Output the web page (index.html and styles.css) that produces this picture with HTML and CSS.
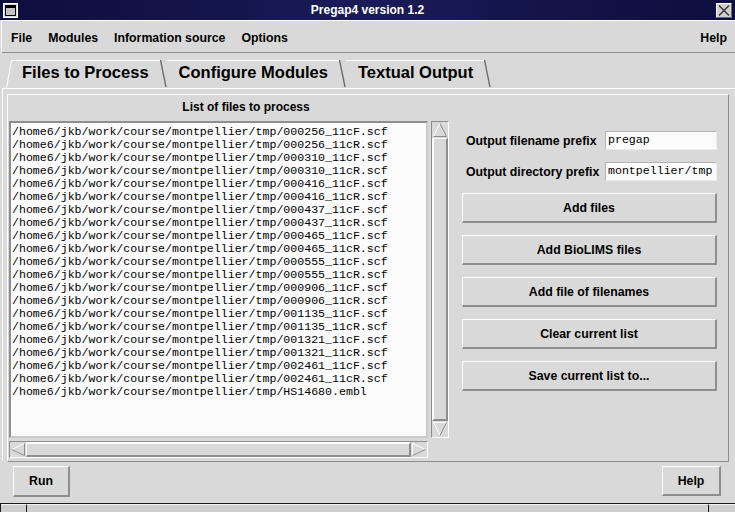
FILE: index.html
```html
<!DOCTYPE html>
<html>
<head>
<meta charset="utf-8">
<title>Pregap4 version 1.2</title>
<link rel="stylesheet" href="styles.css">
</head>
<body>
<div class="window">
  <div class="titlebar">
    <span class="tb-icon">
      <svg width="15" height="15" viewBox="0 0 15 15">
        <rect x="0.5" y="0.5" width="14" height="14" fill="#d9d9d9" stroke="#ffffff"/>
        <rect x="2.5" y="2.5" width="10" height="10" fill="#c4c4c4" stroke="#000000"/>
        <rect x="3" y="3" width="9" height="2" fill="#000000"/>
      </svg>
    </span>
    <span class="title">Pregap4 version 1.2</span>
    <span class="tb-close">
      <svg width="16" height="15" viewBox="0 0 16 15">
        <rect x="0" y="0" width="16" height="15" fill="#d0d0d0"/>
        <path d="M0.5 14.5 V0.5 H15.5" fill="none" stroke="#ffffff"/>
        <path d="M15.5 0.5 V14.5 H0.5" fill="none" stroke="#6a6a6a"/>
        <path d="M3 2.5 L13 12.5 M13 2.5 L3 12.5" stroke="#303030" stroke-width="1.3"/>
      </svg>
    </span>
  </div>

  <div class="menubar">
    <span class="menu">File</span>
    <span class="menu">Modules</span>
    <span class="menu">Information source</span>
    <span class="menu">Options</span>
    <span class="menu-spacer"></span>
    <span class="menu">Help</span>
  </div>

  <div class="tabs">
    <svg class="tab-lead" width="6" height="28" viewBox="0 0 6 28">
      <path d="M5.5 0.5 L0.5 28" stroke="#ffffff" fill="none"/>
    </svg>
    <div class="tab tab-first">Files to Process</div>
    <svg class="tab-sep" width="7" height="28" viewBox="0 0 7 28">
      <path d="M0.5 0 L6 27" stroke="#6e6e6e" stroke-width="1.4" fill="none"/>
    </svg>
    <div class="tab">Configure Modules</div>
    <svg class="tab-sep" width="7" height="28" viewBox="0 0 7 28">
      <path d="M0.5 0 L6 27" stroke="#6e6e6e" stroke-width="1.4" fill="none"/>
    </svg>
    <div class="tab">Textual Output</div>
    <svg class="tab-sep" width="7" height="28" viewBox="0 0 7 28">
      <path d="M0.5 0 L6 27" stroke="#6e6e6e" stroke-width="1.4" fill="none"/>
    </svg>
  </div>

  <div class="notebook">
    <div class="page">
      <div class="left-col">
        <div class="list-title">List of files to process</div>
        <div class="list-grid">
          <div class="listbox">
            <div class="line">/home6/jkb/work/course/montpellier/tmp/000256_11cF.scf</div>
            <div class="line">/home6/jkb/work/course/montpellier/tmp/000256_11cR.scf</div>
            <div class="line">/home6/jkb/work/course/montpellier/tmp/000310_11cF.scf</div>
            <div class="line">/home6/jkb/work/course/montpellier/tmp/000310_11cR.scf</div>
            <div class="line">/home6/jkb/work/course/montpellier/tmp/000416_11cF.scf</div>
            <div class="line">/home6/jkb/work/course/montpellier/tmp/000416_11cR.scf</div>
            <div class="line">/home6/jkb/work/course/montpellier/tmp/000437_11cF.scf</div>
            <div class="line">/home6/jkb/work/course/montpellier/tmp/000437_11cR.scf</div>
            <div class="line">/home6/jkb/work/course/montpellier/tmp/000465_11cF.scf</div>
            <div class="line">/home6/jkb/work/course/montpellier/tmp/000465_11cR.scf</div>
            <div class="line">/home6/jkb/work/course/montpellier/tmp/000555_11cF.scf</div>
            <div class="line">/home6/jkb/work/course/montpellier/tmp/000555_11cR.scf</div>
            <div class="line">/home6/jkb/work/course/montpellier/tmp/000906_11cF.scf</div>
            <div class="line">/home6/jkb/work/course/montpellier/tmp/000906_11cR.scf</div>
            <div class="line">/home6/jkb/work/course/montpellier/tmp/001135_11cF.scf</div>
            <div class="line">/home6/jkb/work/course/montpellier/tmp/001135_11cR.scf</div>
            <div class="line">/home6/jkb/work/course/montpellier/tmp/001321_11cF.scf</div>
            <div class="line">/home6/jkb/work/course/montpellier/tmp/001321_11cR.scf</div>
            <div class="line">/home6/jkb/work/course/montpellier/tmp/002461_11cF.scf</div>
            <div class="line">/home6/jkb/work/course/montpellier/tmp/002461_11cR.scf</div>
            <div class="line">/home6/jkb/work/course/montpellier/tmp/HS14680.embl</div>
          </div>
          <div class="vscroll">
            <svg class="arrow" width="16" height="16" viewBox="0 0 16 16">
              <polygon points="8,1.5 1.5,14.5 14.5,14.5" fill="#d9d9d9"/>
              <path d="M1.5 14.5 L8 1.5" stroke="#ffffff" fill="none"/>
              <path d="M8 1.5 L14.5 14.5 H1.5" stroke="#8e8e8e" fill="none"/>
            </svg>
            <div class="vslider"></div>
            <svg class="arrow" width="16" height="16" viewBox="0 0 16 16">
              <polygon points="1.5,1.5 14.5,1.5 8,14.5" fill="#d9d9d9"/>
              <path d="M8 14.5 L1.5 1.5 H14.5" stroke="#ffffff" fill="none"/>
              <path d="M14.5 1.5 L8 14.5" stroke="#8e8e8e" fill="none"/>
            </svg>
          </div>
          <div class="hscroll">
            <svg class="arrow" width="16" height="15" viewBox="0 0 16 15">
              <polygon points="1.5,7.5 14.5,1.5 14.5,13.5" fill="#d9d9d9"/>
              <path d="M1.5 7.5 L14.5 1.5" stroke="#ffffff" fill="none"/>
              <path d="M14.5 1.5 V13.5 L1.5 7.5" stroke="#8e8e8e" fill="none"/>
            </svg>
            <div class="hslider"></div>
            <svg class="arrow" width="16" height="15" viewBox="0 0 16 15">
              <polygon points="1.5,1.5 14.5,7.5 1.5,13.5" fill="#d9d9d9"/>
              <path d="M1.5 13.5 V1.5 L14.5 7.5" stroke="#ffffff" fill="none"/>
              <path d="M14.5 7.5 L1.5 13.5" stroke="#8e8e8e" fill="none"/>
            </svg>
          </div>
        </div>
      </div>

      <div class="right-col">
        <div class="form">
          <label class="field-label">Output filename prefix</label>
          <div class="entry">pregap</div>
          <label class="field-label">Output directory prefix</label>
          <div class="entry">montpellier/tmp</div>
        </div>
        <div class="buttons">
          <div class="btn">Add files</div>
          <div class="btn">Add BioLIMS files</div>
          <div class="btn">Add file of filenames</div>
          <div class="btn">Clear current list</div>
          <div class="btn">Save current list to...</div>
        </div>
      </div>
    </div>
  </div>

  <div class="actions">
    <div class="btn btn-run">Run</div>
    <div class="btn btn-help">Help</div>
  </div>

  <div class="frame-bottom">
    <span class="fb-seg fb-left"></span>
    <span class="fb-seg fb-mid"></span>
    <span class="fb-seg fb-right"></span>
  </div>
</div>
</body>
</html>
```

FILE: styles.css
```css
* {
  box-sizing: border-box;
}

html, body {
  margin: 0;
  padding: 0;
}

body {
  width: 735px;
  height: 512px;
  overflow: hidden;
  background: #d9d9d9;
  font-family: "Liberation Sans", Arial, sans-serif;
  color: #000;
}

.window {
  display: flex;
  flex-direction: column;
  width: 735px;
  height: 512px;
}

/* ---------- Title bar ---------- */
.titlebar {
  height: 20px;
  display: grid;
  grid-template-columns: 1fr auto 1fr;
  align-items: center;
  background: linear-gradient(to right, #0d0d3e 0%, #1b1b58 50%, #0d0d3e 100%);
}

.tb-icon {
  justify-self: start;
  margin-left: 3px;
  display: flex;
}

.tb-close {
  justify-self: end;
  margin-right: 3px;
  display: flex;
}

.title {
  color: #ffffff;
  font-weight: bold;
  font-size: 12px;
  line-height: 20px;
}

/* ---------- Menu bar ---------- */
.menubar {
  height: 33px;
  display: flex;
  align-items: center;
  gap: 16px;
  padding: 2px 8px 0 9px;
  border-top: 1px solid #ffffff;
  border-left: 1px solid #ffffff;
  border-bottom: 1px solid #8e8e8e;
  margin-left: 1px;
  font-weight: bold;
  font-size: 12.3px;
}

.menu-spacer {
  flex: 1;
}

/* ---------- Tabs ---------- */
.tabs {
  height: 35px;
  padding-top: 7px;
  display: flex;
  align-items: flex-start;
}

.tab-lead {
  margin-left: 6px;
  display: block;
}

.tab-sep {
  display: block;
}

.tab {
  height: 28px;
  border-top: 1px solid #ffffff;
  padding: 0 11px 5px 12px;
  font-size: 16.5px;
  font-weight: bold;
  line-height: 22px;
  white-space: nowrap;
}

.tab-first {
  padding-left: 10px;
}

/* ---------- Notebook page ---------- */
.notebook {
  height: 373px;
  margin-left: 2px;
  padding: 5px 0 0 4px;
  border-left: 1px solid #ffffff;
  border-top: 1px solid #ffffff;
}

.page {
  width: 722px;
  height: 368px;
  border-top: 1px solid #ffffff;
  border-left: 1px solid #ffffff;
  border-right: 1px solid #8e8e8e;
  border-bottom: 1px solid #8e8e8e;
  padding-left: 1px;
  display: flex;
  gap: 13px;
}

.left-col {
  width: 440px;
  display: flex;
  flex-direction: column;
}

.list-title {
  height: 26px;
  line-height: 24px;
  padding-left: 34px;
  text-align: center;
  font-weight: bold;
  font-size: 12px;
}

.list-grid {
  display: grid;
  grid-template-columns: 419px 18px;
  grid-template-rows: 317px 17px;
  column-gap: 3px;
  row-gap: 3px;
}

.listbox {
  background: #fbfbfb;
  border-top: 2px solid #8e8e8e;
  border-left: 2px solid #8e8e8e;
  border-right: 2px solid #c8c8c8;
  border-bottom: 2px solid #c8c8c8;
  padding: 2px 0 0 1px;
  font-family: "Liberation Mono", "Courier New", monospace;
  font-size: 11.6px;
  line-height: 13px;
  overflow: hidden;
  white-space: nowrap;
}

.vscroll {
  display: flex;
  flex-direction: column;
  border-top: 1px solid #8e8e8e;
  border-left: 1px solid #8e8e8e;
  border-right: 1px solid #ffffff;
  border-bottom: 1px solid #ffffff;
}

.vscroll .arrow,
.hscroll .arrow {
  display: block;
  flex: none;
}

.vslider {
  flex: 1;
  border-top: 1px solid #ffffff;
  border-left: 2px solid #ffffff;
  border-right: 2px solid #8e8e8e;
  border-bottom: 2px solid #8e8e8e;
}

.hscroll {
  display: flex;
  border-top: 1px solid #8e8e8e;
  border-left: 1px solid #8e8e8e;
  border-right: 1px solid #ffffff;
  border-bottom: 1px solid #ffffff;
}

.hslider {
  flex: 1;
  border-top: 2px solid #ffffff;
  border-left: 1px solid #ffffff;
  border-right: 2px solid #8e8e8e;
  border-bottom: 2px solid #8e8e8e;
}

/* ---------- Right column ---------- */
.right-col {
  width: 255px;
  padding-top: 36px;
  display: flex;
  flex-direction: column;
  gap: 12px;
}

.form {
  display: grid;
  grid-template-columns: 1fr 112px;
  grid-auto-rows: 19px;
  row-gap: 12px;
  align-items: center;
}

.field-label {
  padding-left: 4px;
  font-weight: bold;
  font-size: 12.3px;
  white-space: nowrap;
}

.entry {
  height: 19px;
  background: #fbfbfb;
  border-top: 1px solid #b4b4b4;
  border-left: 1px solid #b4b4b4;
  border-right: 1px solid #ececec;
  border-bottom: 1px solid #ececec;
  padding-left: 2px;
  font-family: "Liberation Mono", "Courier New", monospace;
  font-size: 11.6px;
  line-height: 16px;
  white-space: nowrap;
  overflow: hidden;
}

.buttons {
  display: flex;
  flex-direction: column;
  gap: 12px;
}

.btn {
  height: 30px;
  display: flex;
  align-items: center;
  justify-content: center;
  border-top: 1px solid #ffffff;
  border-left: 1px solid #ffffff;
  border-right: 2px solid #8e8e8e;
  border-bottom: 2px solid #8e8e8e;
  font-weight: bold;
  font-size: 12.3px;
  white-space: nowrap;
}

/* ---------- Bottom actions ---------- */
.actions {
  height: 42px;
  display: flex;
  justify-content: space-between;
  align-items: flex-start;
  padding: 5px 14px 0 13px;
}

.btn-run {
  width: 57px;
  height: 31px;
}

.btn-help {
  width: 59px;
  height: 30px;
}

/* ---------- Window frame bottom ---------- */
.frame-bottom {
  height: 9px;
  display: flex;
  border-top: 1px solid #1a1a1a;
  border-left: 1px solid #1a1a1a;
  background: #cfcfcf;
}

.fb-seg {
  display: block;
  border-top: 1px solid #f2f2f2;
}

.fb-left {
  width: 26px;
  border-right: 1px solid #1a1a1a;
}

.fb-mid {
  flex: 1;
}

.fb-right {
  width: 27px;
  border-left: 1px solid #1a1a1a;
}
```
